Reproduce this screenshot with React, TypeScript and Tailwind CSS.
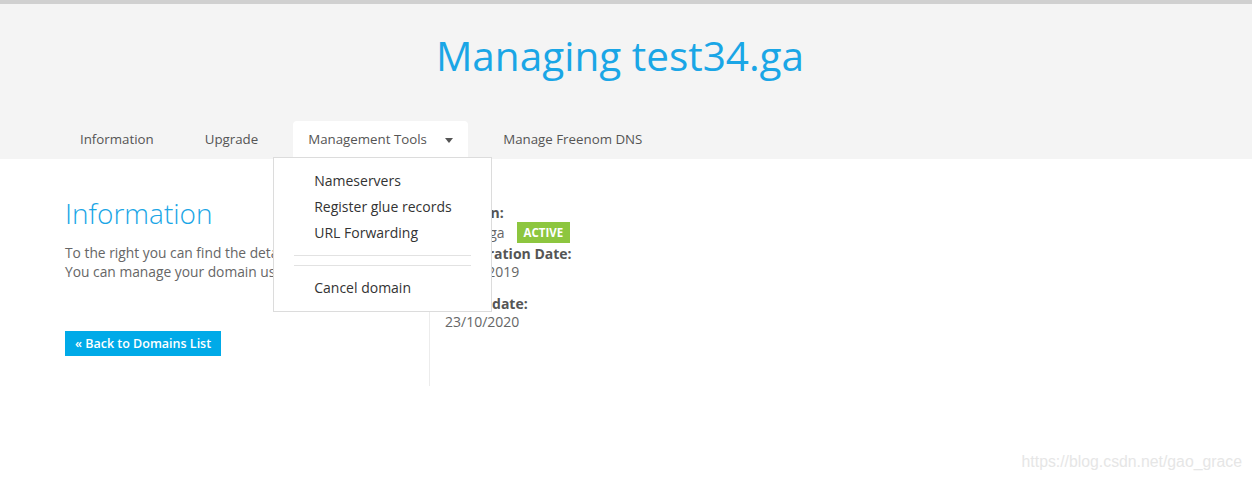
import React from "react";

export default function App() {
  const font = { fontFamily: '"Open Sans", "Noto Sans", sans-serif' };
  return (
    <div className="relative h-[482px] w-[1252px] overflow-hidden bg-white" style={font}>
      <div className="border-t-4 border-[#d0d0d0] bg-[#f4f4f4]">
        <h1 className="pr-[12px] pt-[24px] text-center text-[40.5px] font-normal leading-[56px] text-[#1aa6e6]">
          Managing test34.ga
        </h1>
        <nav className="mt-[37px] flex h-[38px] items-stretch pl-[65px] text-[13.3px] text-[#555]">
          <div className="flex items-center px-[15px]">Information</div>
          <div className="ml-[21px] flex items-center px-[15px]">Upgrade</div>
          <div className="relative ml-[20px] flex w-[175px] items-center rounded-t-[4px] bg-white pl-[15px]">
            <span>Management Tools</span>
            <svg className="ml-[18px]" width="8" height="5" viewBox="0 0 8 5">
              <path d="M0 0 L8 0 L4 5 Z" fill="#555" />
            </svg>
            <div className="absolute left-[-20px] top-[36px] z-10 w-[219px] border border-[#dcdcdc] bg-white pb-[10px] pt-[10px] text-[14px] text-[#333]">
              <div className="pl-[40px] leading-[26px]">Nameservers</div>
              <div className="pl-[40px] leading-[26px]">Register glue records</div>
              <div className="pl-[40px] leading-[26px]">URL Forwarding</div>
              <div className="mx-[20px] mt-[9px] h-px bg-[#e2e2e2]" />
              <div className="mx-[20px] mt-[9px] h-px bg-[#e2e2e2]" />
              <div className="mt-[9px] pl-[40px] leading-[26px]">Cancel domain</div>
            </div>
          </div>
          <div className="ml-[20px] flex items-center px-[15px]">Manage Freenom DNS</div>
        </nav>
      </div>

      <div className="ml-[65px] mt-[32px] flex">
        <div className="w-[364px]">
          <h2 className="pt-[4px] text-[28px] font-light leading-[36px] text-[#1aa6e6]">Information</h2>
          <p className="mt-[12px] text-[13.8px] leading-[19px] text-[#666]">
            To the right you can find the details of your domain.
            <br />
            You can manage your domain using the tabs above.
          </p>
          <div className="mt-[49px]">
            <span className="inline-block bg-[#00aae8] px-[10px] text-[12.5px] font-semibold leading-[25px] text-white">
              « Back to Domains List
            </span>
          </div>
        </div>
        <div className="h-[195px] border-l border-[#ececec] pl-[15px] pt-[13px] text-[14px] leading-[18px] text-[#666]">
          <div className="font-bold text-[#555]">Domain:</div>
          <div className="flex items-center">
            <span>test34.ga</span>
            <span className="ml-[12px] bg-[#8dc63f] px-[7px] text-[11.5px] font-bold leading-[21px] text-white">ACTIVE</span>
          </div>
          <div className="mt-[2px] font-bold text-[#555]">Registration Date:</div>
          <div>23/10/2019</div>
          <div className="mt-[14px] font-bold text-[#555]">Expiry date:</div>
          <div>23/10/2020</div>
        </div>
      </div>

      <div
        className="absolute bottom-[8px] right-[10px] text-[15.8px] text-[#e6e6e6]"
        style={{ fontFamily: '"Liberation Sans", Arial, sans-serif' }}
      >
        https://blog.csdn.net/gao_grace
      </div>
    </div>
  );
}
